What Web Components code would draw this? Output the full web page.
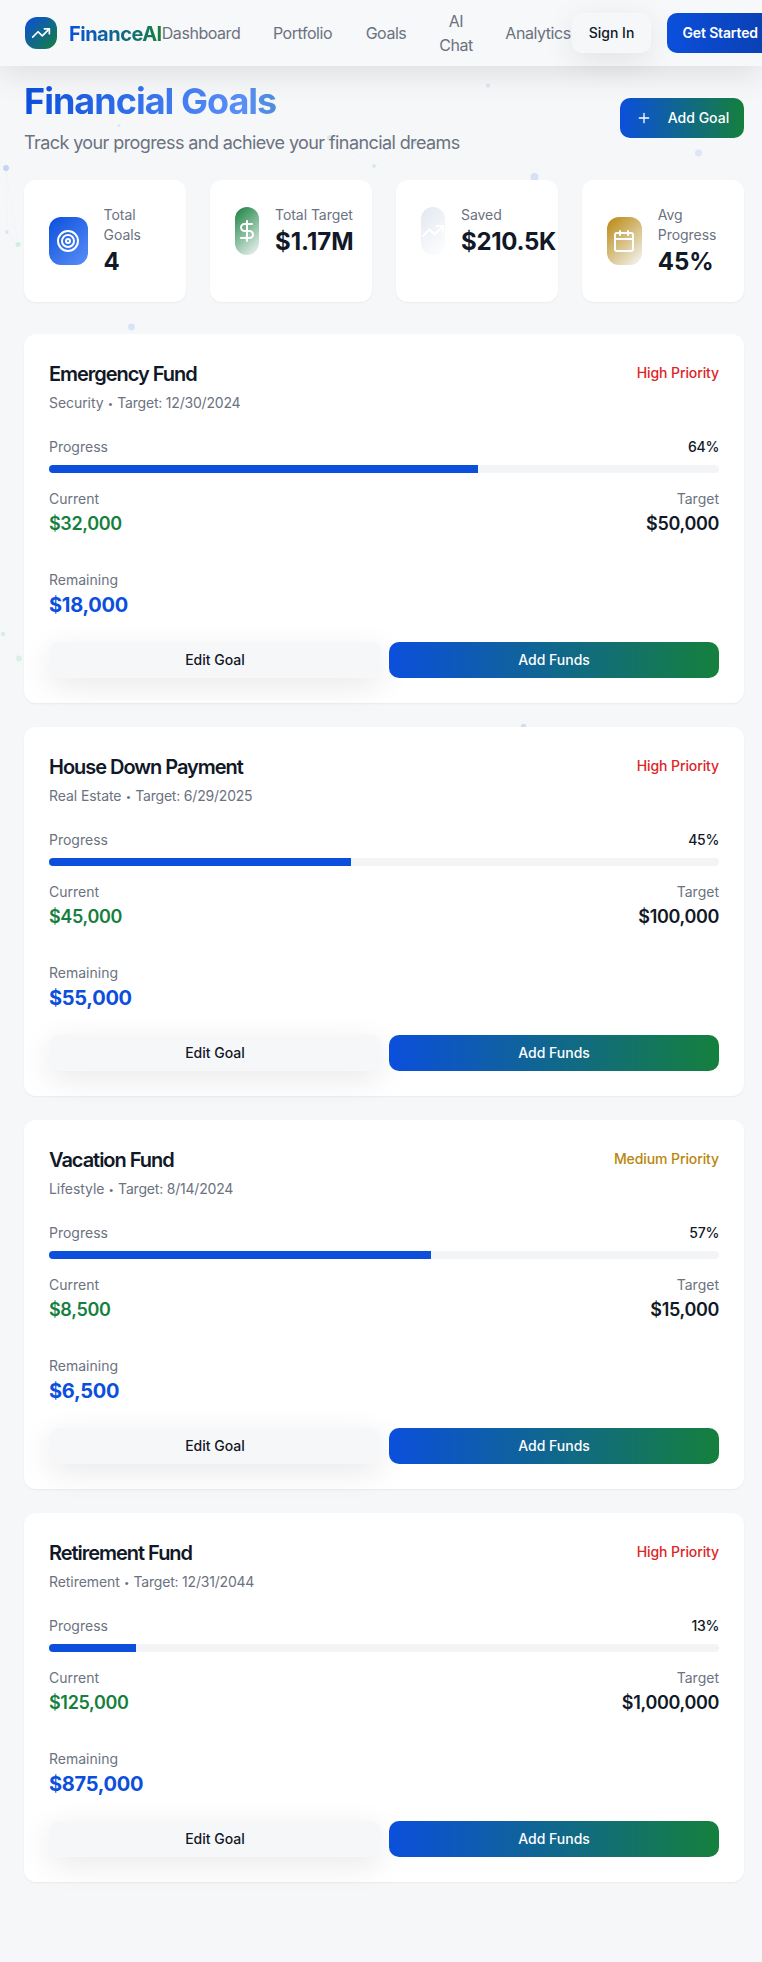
<!DOCTYPE html>
<html lang="en">
<head>
<meta charset="utf-8">
<title>FinanceAI – Financial Goals</title>
<style>
html{background:#f6f7f9}
body{margin:0;width:762px;height:1962px;overflow:hidden;position:relative;font-family:Inter,sans-serif;font-size:16px;line-height:24px;color:#111827;background:#f6f7f9}
</style>
</head>
<body>
<particle-field></particle-field>
<site-nav></site-nav>
<goals-page></goals-page>
<script>
const define = (name, html, setup) => {
  const t = document.createElement('template');
  t.innerHTML = html;
  customElements.define(name, class extends HTMLElement {
    connectedCallback() {
      if (this.shadowRoot) return;
      const root = this.attachShadow({mode: 'open'});
      root.append(t.content.cloneNode(true));
      if (setup) setup(this, root);
    }
  });
};

const ICONS = {
  trend: '<path d="M22 7 13.5 15.5 8.5 10.5 2 17"/><path d="M16 7h6v6"/>',
  target: '<circle cx="12" cy="12" r="10"/><circle cx="12" cy="12" r="6"/><circle cx="12" cy="12" r="2"/>',
  dollar: '<path d="M12 2v20"/><path d="M17 5H9.5a3.5 3.5 0 0 0 0 7h5a3.5 3.5 0 0 1 0 7H6"/>',
  calendar: '<path d="M8 2v4M16 2v4"/><rect x="3" y="4" width="18" height="18" rx="2"/><path d="M3 10h18"/>',
  plus: '<path d="M5 12h14M12 5v14"/>'
};

define('ui-icon', `<style>
:host{display:block;flex:none;width:24px;height:24px}
svg{display:block;width:100%;height:100%;fill:none;stroke:currentColor;stroke-width:2;stroke-linecap:round;stroke-linejoin:round}
</style><svg viewBox="0 0 24 24"></svg>`, (el, root) => {
  root.querySelector('svg').innerHTML = ICONS[el.getAttribute('name')];
});

define('particle-field', `<style>
:host{display:block;position:absolute;inset:0;overflow:hidden}
svg{display:block}
.b{fill:#0b4fdc}.g{fill:#22c55e}line{stroke:#0b4fdc;stroke-opacity:.02}
</style><svg width="762" height="1962">
<line x1="6" y1="168" x2="7" y2="232"/><line x1="6" y1="168" x2="18" y2="245"/><line x1="7" y1="232" x2="18" y2="245"/><line x1="330" y1="138" x2="374" y2="166"/><line x1="374" y1="166" x2="415" y2="142"/><line x1="3" y1="634" x2="19" y2="658"/>
<circle class="b" cx="6" cy="168" r="3" opacity=".2"/>
<circle class="b" cx="7" cy="232" r="1.7" opacity=".12"/>
<circle class="g" cx="18" cy="244.500" r="2.500" opacity=".17"/>
<circle class="g" cx="119" cy="125.500" r="1.500" opacity=".16"/>
<circle class="g" cx="330" cy="138" r="3" opacity=".15"/>
<circle class="g" cx="374" cy="166" r="2" opacity=".16"/>
<circle class="b" cx="415" cy="142.500" r="1.700" opacity=".15"/>
<circle class="b" cx="488" cy="85.500" r="2" opacity=".1"/>
<circle class="b" cx="698.500" cy="153" r="3.500" opacity=".1"/>
<circle class="b" cx="534.500" cy="177" r="4" opacity=".13"/>
<circle class="b" cx="131.500" cy="327" r="3.400" opacity=".12"/>
<circle class="g" cx="3" cy="634" r="2.200" opacity=".15"/>
<circle class="g" cx="19" cy="658.500" r="3" opacity=".12"/>
<circle class="b" cx="523.500" cy="726.500" r="2.700" opacity=".15"/>
</svg>`);

define('ui-button', `<style>
:host{display:flex;align-items:center;justify-content:center;box-sizing:border-box;height:36px;padding:0 16px;border-radius:10px;font-size:14px;line-height:20px;font-weight:500;white-space:nowrap;color:#111827}
:host([kind=glass]){background:#f6f7f9;border:1px solid rgba(255,255,255,.2);box-shadow:0 8px 32px rgba(0,0,0,.09)}
:host([kind=gradient]){color:#fff;background:linear-gradient(90deg,#0b4fdc,#15803d)}
:host([kind=primary]){color:#fff;font-weight:600;letter-spacing:-.15px;background:linear-gradient(90deg,#0b4fdc,#0a3fb0)}
:host([size=md]){height:40px}
</style><slot></slot>`);

define('site-nav', `<style>
:host{display:block;position:relative;z-index:2}
nav{box-sizing:border-box;height:66px;display:flex;align-items:center;padding:0 0 0 25px;background:#f7f8fa;box-shadow:0 8px 32px rgba(0,0,0,.1)}
.logo{flex:none;width:32px;height:32px;border-radius:12px;background:linear-gradient(135deg,#0b4fdc,#15803d);display:flex;align-items:center;justify-content:center;color:#fff}
.logo ui-icon{width:20px;height:20px}
.brand{flex:none;width:93px;padding-top:1px;margin-left:12px;font-size:20px;line-height:28px;font-weight:700;letter-spacing:-.5px;white-space:nowrap;background:linear-gradient(90deg,#0b4fdc,#15803d);-webkit-background-clip:text;background-clip:text;color:transparent}
.links{flex:none;width:410px;display:grid;grid-template-columns:78px 61px 42px 34px 66px;align-items:center;justify-items:center;column-gap:32px;color:#6b7280;text-align:center;letter-spacing:-.45px}
.acts{flex:none;display:flex;gap:16px}
.acts ui-button:first-child{width:79px}
.acts ui-button:last-child{padding-left:15.500px}
</style><nav><div class="logo"><ui-icon name="trend"></ui-icon></div><div class="brand">FinanceAI</div>
<div class="links"><span>Dashboard</span><span>Portfolio</span><span>Goals</span><span>AI<br>Chat</span><span>Analytics</span></div>
<div class="acts"><ui-button kind="glass" size="md">Sign In</ui-button><ui-button kind="primary" size="md">Get Started</ui-button></div></nav>`);

define('stat-card', `<style>
:host{box-sizing:border-box;height:122px;padding:25px;border-radius:12px;background:#fff;box-shadow:0 1px 2px rgba(0,0,0,.05);display:block}
.row{display:flex;align-items:center;gap:16px}
.icon{flex:none;height:48px;border-radius:12px;display:flex;align-items:center;justify-content:center;color:#fff;overflow:hidden}
.label{font-size:14px;line-height:20px;color:#6b7280;letter-spacing:-.05px}
.value{position:relative;top:1px;font-size:24px;line-height:32px;font-weight:700;white-space:nowrap}
:host([icon=trend]) .value{letter-spacing:-.3px}
.text{flex:1;min-width:0}
:host([w="24"]) .text{flex:none;white-space:nowrap}
</style><div class="row"><div class="icon"></div><div class="text"><div class="label"></div><div class="value"></div></div></div>`, (el, root) => {
  const a = n => el.getAttribute(n), q = s => root.querySelector(s);
  const icon = document.createElement('ui-icon');
  icon.setAttribute('name', a('icon'));
  q('.icon').append(icon);
  q('.icon').style.width = a('w') + 'px';
  q('.icon').style.background = `linear-gradient(135deg,${a('from')},${a('to')})`;
  q('.label').textContent = a('label');
  q('.value').textContent = a('value');
});

define('goal-card', `<style>
:host{display:block;box-sizing:border-box;height:369px;padding:25px;border-radius:12px;background:#fff;box-shadow:0 1px 2px rgba(0,0,0,.05);font-size:14px;line-height:20px}
.row{display:flex;justify-content:space-between}
h3{margin:0 0 5px;padding-top:1px;font-size:20px;line-height:28px;font-weight:600;letter-spacing:-1.030px}
.mut{color:#6b7280}
.sub{letter-spacing:-.07px;white-space:nowrap}
.dot{display:inline-block;width:6px;text-align:center;font:11px/10px "Liberation Sans",sans-serif;letter-spacing:0}
.date{letter-spacing:-.2px}
.prio{line-height:28px;font-weight:500;color:#dc2626;letter-spacing:-.1px}
.prio.medium{color:#b8860b}
.prog{margin-top:24px}.pct{font-weight:500;letter-spacing:-.3px}
.bar{height:8px;margin:8px 0 16px;border-radius:4px;background:#f3f4f6;overflow:hidden}
.fill{height:100%;background:#0b4fdc}
.amt{padding-top:1px;font-size:18px;line-height:28px;font-weight:600;letter-spacing:-.34px}
.cur{color:#15803d}.right{text-align:right}
.rem{margin-top:32px}
.left{padding-top:1px;font-size:20px;line-height:28px;font-weight:700;letter-spacing:-.28px;color:#0b4fdc}
.acts{display:flex;gap:8px;margin-top:23px}
.acts ui-button{flex:1 1 0}
</style>
<div class="row"><div><h3></h3><div class="mut sub"><span class="kind"></span> <span class="dot">•</span> <span class="date"></span></div></div><div class="prio"></div></div>
<div class="row prog"><span class="mut">Progress</span><span class="pct"></span></div>
<div class="bar"><div class="fill"></div></div>
<div class="row"><div><div class="mut">Current</div><div class="amt cur"></div></div><div class="right"><div class="mut">Target</div><div class="amt tgt"></div></div></div>
<div class="rem mut">Remaining</div><div class="left"></div>
<div class="acts"><ui-button kind="glass">Edit Goal</ui-button><ui-button kind="gradient">Add Funds</ui-button></div>`, (el, root) => {
  const d = el.dataset, q = s => root.querySelector(s);
  q('h3').textContent = d.name;
  q('.kind').textContent = d.kind;
  q('.date').textContent = 'Target: ' + d.date;
  q('.prio').textContent = d.priority + ' Priority';
  q('.prio').classList.add(d.priority.toLowerCase());
  q('.pct').textContent = d.pct + '%';
  q('.fill').style.width = d.pct + '%';
  q('.cur').textContent = d.current;
  q('.tgt').textContent = d.target;
  q('.left').textContent = d.left;
});

define('goals-page', `<style>
:host{display:block;position:relative;z-index:1;width:720px;margin-left:24px}
header{height:114px;display:flex;justify-content:space-between;align-items:flex-start}
h1{margin:15px 0 0;font-size:36px;line-height:40px;font-weight:700;letter-spacing:-.98px;white-space:nowrap;background:linear-gradient(90deg,#0b4fdc 0,#5a8ff8 218px,#15803d 420px);-webkit-background-clip:text;background-clip:text;color:transparent}
header>div{width:460px}
p{margin:8px 0 0;font-size:18px;line-height:28px;letter-spacing:-.59px;color:#6b7280;white-space:nowrap}
header ui-button{margin-top:32px;width:124px}
header ui-icon{width:16px;height:16px;margin:0 16px 0 1px}
.stats{display:grid;grid-template-columns:repeat(4,162px);gap:24px}
.goals{display:grid;gap:24px;margin-top:32px}
</style>
<header><div><h1>Financial Goals</h1><p>Track your progress and achieve your financial dreams</p></div>
<ui-button kind="gradient" size="md"><ui-icon name="plus"></ui-icon>Add Goal</ui-button></header>
<div class="stats">
<stat-card icon="target" w="38.6" from="#0b4fdc" to="#5a8ff8" label="Total Goals" value="4"></stat-card>
<stat-card icon="dollar" w="24" from="#15803d" to="#f6f7f9" label="Total Target" value="$1.17M"></stat-card>
<stat-card icon="trend" w="24" from="#e2e8f0" to="#ffffff" label="Saved" value="$210.5K"></stat-card>
<stat-card icon="calendar" w="34.8" from="#b8860b" to="#f6f7f9" label="Avg Progress" value="45%"></stat-card>
</div>
<div class="goals">
<goal-card data-name="Emergency Fund" data-kind="Security" data-date="12/30/2024" data-priority="High" data-pct="64" data-current="$32,000" data-target="$50,000" data-left="$18,000"></goal-card>
<goal-card data-name="House Down Payment" data-kind="Real Estate" data-date="6/29/2025" data-priority="High" data-pct="45" data-current="$45,000" data-target="$100,000" data-left="$55,000"></goal-card>
<goal-card data-name="Vacation Fund" data-kind="Lifestyle" data-date="8/14/2024" data-priority="Medium" data-pct="57" data-current="$8,500" data-target="$15,000" data-left="$6,500"></goal-card>
<goal-card data-name="Retirement Fund" data-kind="Retirement" data-date="12/31/2044" data-priority="High" data-pct="13" data-current="$125,000" data-target="$1,000,000" data-left="$875,000"></goal-card>
</div>`);
</script>
</body>
</html>
